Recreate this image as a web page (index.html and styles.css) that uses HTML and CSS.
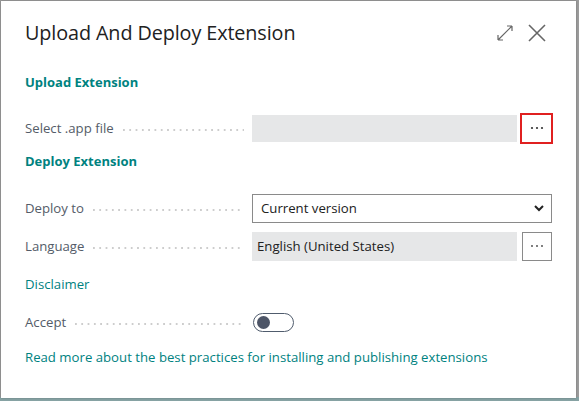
FILE: index.html
```html
<!DOCTYPE html>
<html>
<head>
<meta charset="utf-8">
<link rel="stylesheet" href="styles.css">
</head>
<body>
<div class="backdrop">
  <div class="dialog">
    <div class="header">
      <h1 class="title">Upload And Deploy Extension</h1>
      <div class="header-actions">
        <svg class="icon-expand" width="18" height="18" viewBox="0 0 18 18">
          <path d="M2 16 L16 2 M2 16 L2 11 M2 16 L7 16 M16 2 L11 2 M16 2 L16 7" fill="none" stroke="#666" stroke-width="1.2"/>
        </svg>
        <svg class="icon-close" width="18" height="18" viewBox="0 0 18 18">
          <path d="M1 1 L17 17 M17 1 L1 17" fill="none" stroke="#666" stroke-width="1.6"/>
        </svg>
      </div>
    </div>

    <div class="section-title first">Upload Extension</div>
    <div class="row">
      <div class="label"><span>Select .app file</span><i class="leader"></i></div>
      <div class="field readonly"></div>
      <button class="more marked"><svg width="14" height="4" viewBox="0 0 14 4"><circle cx="2" cy="2" r="1.1" fill="#333"/><circle cx="7" cy="2" r="1.1" fill="#333"/><circle cx="12" cy="2" r="1.1" fill="#333"/></svg></button>
    </div>

    <div class="section-title second">Deploy Extension</div>
    <div class="row">
      <div class="label"><span>Deploy to</span><i class="leader"></i></div>
      <div class="select">
        <span>Current version</span>
        <svg width="12" height="8" viewBox="0 0 12 8"><path d="M2 2 L6 6 L10 2" fill="none" stroke="#222" stroke-width="2"/></svg>
      </div>
    </div>
    <div class="row">
      <div class="label"><span>Language</span><i class="leader"></i></div>
      <div class="field readonly text">English (United States)</div>
      <button class="more"><svg width="14" height="4" viewBox="0 0 14 4"><circle cx="2" cy="2" r="0.9" fill="#444"/><circle cx="7" cy="2" r="0.9" fill="#444"/><circle cx="12" cy="2" r="0.9" fill="#444"/></svg></button>
    </div>
    <div class="row">
      <a class="link">Disclaimer</a>
    </div>
    <div class="row">
      <div class="label"><span>Accept</span><i class="leader"></i></div>
      <div class="toggle"><span class="knob"></span></div>
    </div>
    <a class="link footer-link">Read more about the best practices for installing and publishing extensions</a>
  </div>
</div>
</body>
</html>
```

FILE: styles.css
```css
html, body {
  margin: 0;
  padding: 0;
}
body {
  width: 579px;
  height: 401px;
  background: #9b9b9b;
  overflow: hidden;
  font-family: "Open Sans", "Noto Sans", sans-serif;
}
.backdrop {
  height: 401px;
  padding: 1px 0 0 1px;
  box-sizing: border-box;
  background: linear-gradient(to bottom, #9b9b9b 0, #9b9b9b 397px, #86a2a3 397px);
}
.dialog {
  width: 575px;
  height: 397px;
  background: #fff;
  box-sizing: border-box;
  padding: 0 24px;
  box-shadow: 0 0 2px rgba(0,0,0,0.25);
}
.header {
  height: 71px;
  display: flex;
  align-items: flex-start;
  justify-content: space-between;
}
.title {
  margin: 19px 0 0 0;
  font-size: 19.8px;
  font-weight: 400;
  line-height: 26px;
  color: #212121;
  letter-spacing: -0.1px;
}
.header-actions {
  display: flex;
  gap: 14px;
  margin-top: 23px;
  margin-right: 6px;
}
.section-title {
  color: #00827f;
  font-weight: 700;
  font-size: 13px;
  line-height: 20px;
}
.section-title.first { margin-bottom: 17px; }
.section-title.second { margin-top: 4px; margin-bottom: 18px; }
.row {
  height: 38px;
  display: flex;
  align-items: center;
}
.label {
  width: 227px;
  flex: none;
  display: flex;
  align-items: center;
  color: #545c68;
  font-size: 13.2px;
}
.leader {
  flex: 1;
  height: 2px;
  margin: 3px 8px 0 9px;
  background-image: linear-gradient(to right, #cdcdcd 2px, transparent 2px);
  background-size: 6.3px 2px;
  background-repeat: repeat-x;
  background-position: left center;
}
.field {
  width: 265px;
  height: 27px;
  box-sizing: border-box;
}
.readonly {
  background: #e6e7e8;
}
.field.text {
  height: 29px;
  padding-left: 5px;
  display: flex;
  align-items: center;
  font-size: 13.2px;
  color: #212121;
}
.more {
  width: 30px;
  height: 29px;
  margin-left: 5px;
  border: 1px solid #8a8a8a;
  background: #fff;
  padding: 0;
  display: flex;
  align-items: center;
  justify-content: center;
}
.more.marked {
  border: none;
  outline: 2px solid #e02020;
  outline-offset: 0;
  width: 29px;
  height: 27px;
  margin-left: 5px;
}
.select {
  width: 300px;
  height: 29px;
  box-sizing: border-box;
  border: 1px solid #8a8a8a;
  display: flex;
  align-items: center;
  justify-content: space-between;
  padding: 0 6px 0 8px;
  font-size: 13.2px;
  color: #212121;
}
.link {
  color: #00827f;
  font-size: 13.2px;
  text-decoration: none;
}
.footer-link {
  display: block;
  margin-top: 6px;
  line-height: 20px;
}
.toggle {
  width: 41px;
  height: 19px;
  box-sizing: border-box;
  border: 1px solid #505c6d;
  border-radius: 10px;
  margin-left: 1px;
  position: relative;
}
.knob {
  position: absolute;
  left: 3px;
  top: 2px;
  width: 13px;
  height: 13px;
  border-radius: 50%;
  background: #4d5567;
}
```
